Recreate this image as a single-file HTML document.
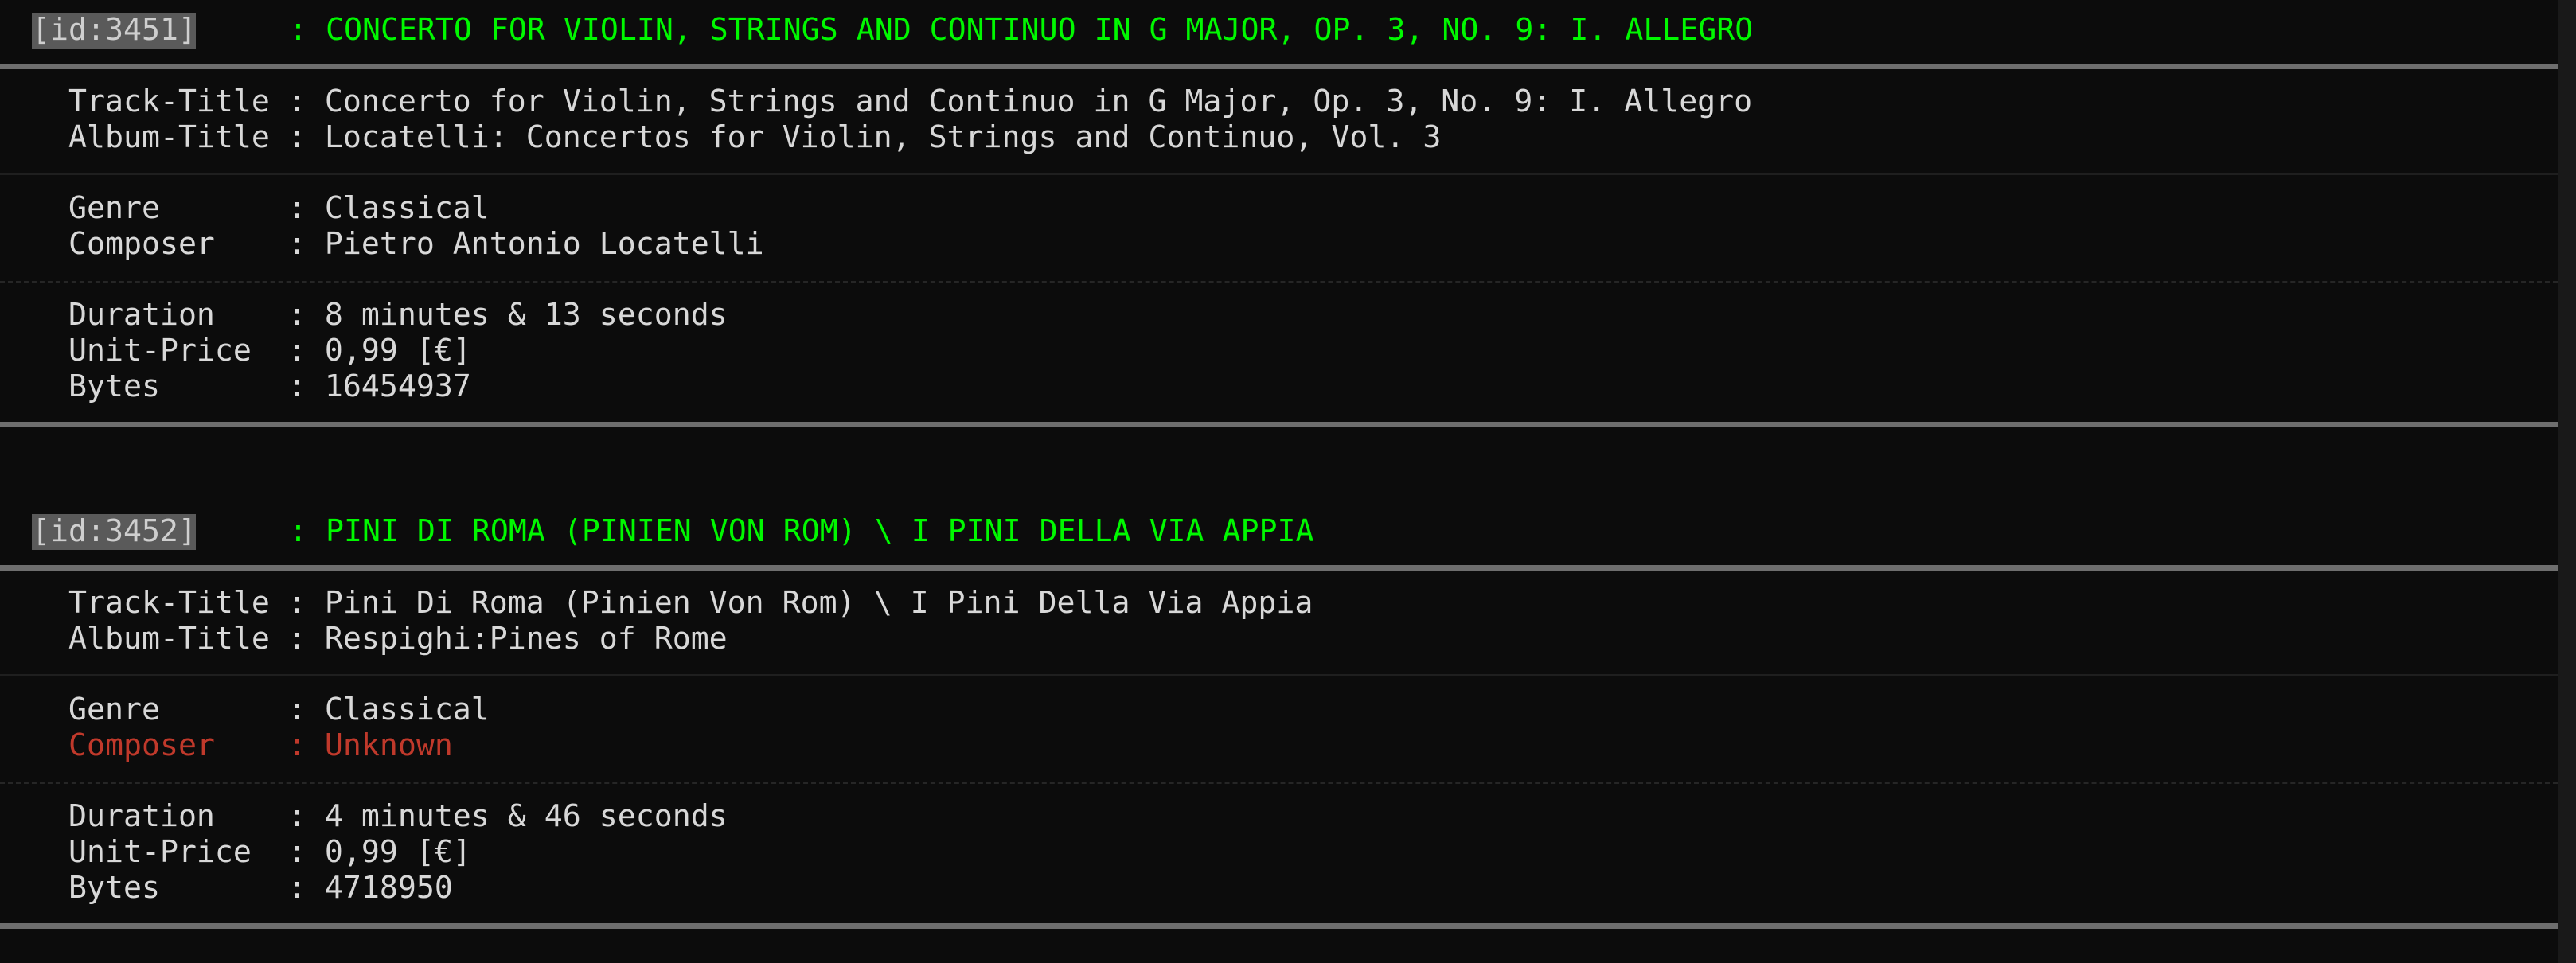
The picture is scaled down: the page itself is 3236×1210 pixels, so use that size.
<!DOCTYPE html>
<html><head><meta charset="utf-8"><style>
html,body{margin:0;padding:0;background:#0c0c0c;width:3236px;height:1210px;overflow:hidden}
.sb{position:absolute;left:3213px;top:0;width:23px;height:1210px;background:#191919}
.t{position:absolute;font-family:"DejaVu Sans Mono","Liberation Mono",monospace;font-size:38.2px;line-height:45px;color:#d8d8d8;white-space:pre}
.g{color:#00f800}
.r{color:#c0392b}
.badge{position:absolute;left:40px;width:206px;height:45px;background:#5a5a5a}
.thick{position:absolute;left:0;width:3213px;height:7px;background:#6e6e6e}
.thin{position:absolute;left:0;width:3213px;height:3px;background:#1f1f1f}
.dash{position:absolute;left:0;width:3213px;height:0;border-top:2px dashed #262626}
</style></head><body>
<div class="sb"></div>

<div class="badge" style="top:16px"></div>
<div class="t" style="left:40px;top:16px;color:#cfcfcf">[id:3451]</div>
<div class="t g" style="left:363px;top:16px">: CONCERTO FOR VIOLIN, STRINGS AND CONTINUO IN G MAJOR, OP. 3, NO. 9: I. ALLEGRO</div>
<div class="thick" style="top:80px"></div>
<div class="t" style="left:86px;top:106px">Track-Title : Concerto for Violin, Strings and Continuo in G Major, Op. 3, No. 9: I. Allegro
Album-Title : Locatelli: Concertos for Violin, Strings and Continuo, Vol. 3</div>
<div class="thin" style="top:217px"></div>
<div class="t" style="left:86px;top:240px">Genre       : Classical
Composer    : Pietro Antonio Locatelli</div>
<div class="dash" style="top:353px"></div>
<div class="t" style="left:86px;top:374px">Duration    : 8 minutes &amp; 13 seconds
Unit-Price  : 0,99 [€]
Bytes       : 16454937</div>
<div class="thick" style="top:530px"></div>

<div class="badge" style="top:646px"></div>
<div class="t" style="left:40px;top:646px;color:#cfcfcf">[id:3452]</div>
<div class="t g" style="left:363px;top:646px">: PINI DI ROMA (PINIEN VON ROM) \ I PINI DELLA VIA APPIA</div>
<div class="thick" style="top:710px"></div>
<div class="t" style="left:86px;top:736px">Track-Title : Pini Di Roma (Pinien Von Rom) \ I Pini Della Via Appia
Album-Title : Respighi:Pines of Rome</div>
<div class="thin" style="top:847px"></div>
<div class="t" style="left:86px;top:870px">Genre       : Classical
<span class="r">Composer    : Unknown</span></div>
<div class="dash" style="top:983px"></div>
<div class="t" style="left:86px;top:1004px">Duration    : 4 minutes &amp; 46 seconds
Unit-Price  : 0,99 [€]
Bytes       : 4718950</div>
<div class="thick" style="top:1160px"></div>
</body></html>
